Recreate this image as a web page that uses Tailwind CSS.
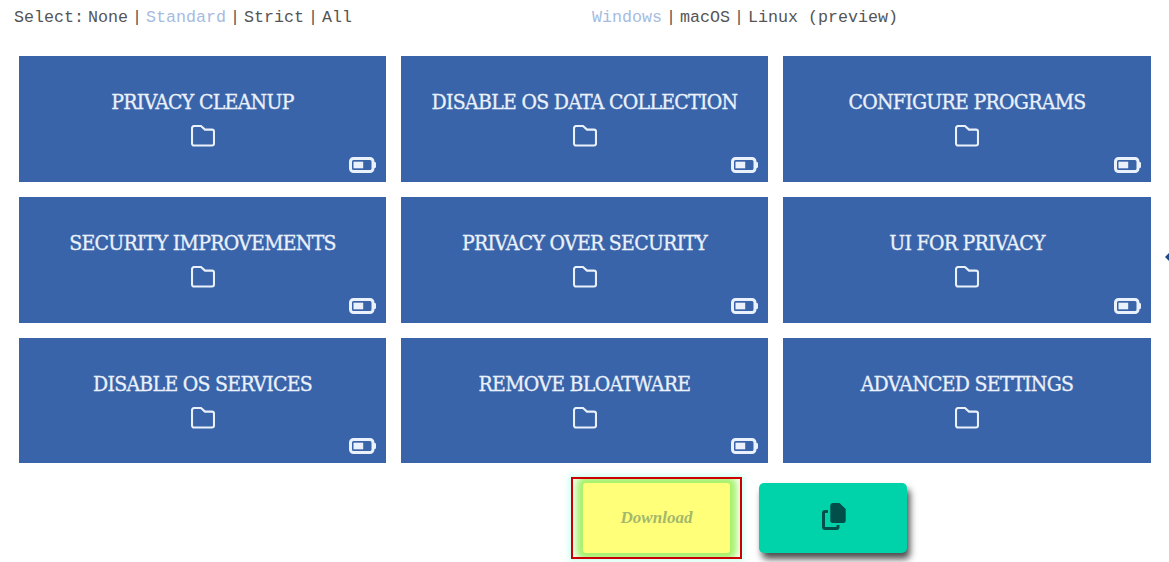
<!DOCTYPE html>
<html lang="en">
<head>
<meta charset="utf-8">
<script src="https://cdn.jsdelivr.net/npm/@tailwindcss/browser@4"></script>
<title>Privacy</title>
</head>
<body class="relative h-[562px] w-[1169px] overflow-hidden bg-white">
<svg width="0" height="0" class="absolute">
<defs>
<symbol id="folder" viewBox="0 0 24 22"><path d="M1 3.200A2.200 2.200 0 0 1 3.200 1H10L14 4.600H21A2 2 0 0 1 23 6.600V18.500A2 2 0 0 1 21 20.500H3A2 2 0 0 1 1 18.500Z" fill="none" stroke="currentColor" stroke-width="2.100" stroke-linejoin="round"/></symbol>
<symbol id="battery" viewBox="0 0 27 16"><rect x="1.500" y="1.500" width="22.500" height="13" rx="3" fill="none" stroke="currentColor" stroke-width="3"/><rect x="4.500" y="4.700" width="9.700" height="6.600" fill="currentColor"/><path d="M25 5h.8a1.200 1.200 0 0 1 1.200 1.200v3.600a1.200 1.200 0 0 1-1.200 1.200H25z" fill="currentColor"/></symbol>
</defs>
</svg>
<div class="flex h-[35px] font-['Liberation_Mono',monospace] text-[16.670px] leading-[35px] text-[#555]">
  <div class="ml-[14px] flex w-[578px]"><span class="mr-1">Select:</span><span>None</span><span class="mx-1">|</span><span class="text-[#a7bbe0]">Standard</span><span class="mx-1">|</span><span>Strict</span><span class="mx-1">|</span><span>All</span></div>
  <div class="flex"><span class="text-[#a7bbe0]">Windows</span><span class="mx-1">|</span><span>macOS</span><span class="mx-1">|</span><span>Linux (preview)</span></div>
</div>
<main class="ml-[19px] mt-[21px] grid w-[1132px] grid-cols-[367px_367px_368px] auto-rows-[125.8px] gap-[15px] font-['DejaVu_Serif',serif] text-[#eaf1fb] [font-stretch:condensed]">
  <a class="relative flex flex-col items-center bg-[#3a64a9] pt-[32px]"><h2 class="text-[21px] leading-[28px] tracking-[-0.7px] [-webkit-text-stroke:0.3px]">PRIVACY CLEANUP</h2><svg class="mt-[9px] h-[22px] w-[24px]"><use href="#folder"/></svg><svg class="absolute bottom-[9px] right-[10px] h-[16px] w-[27px]"><use href="#battery"/></svg></a>
  <a class="relative flex flex-col items-center bg-[#3a64a9] pt-[32px]"><h2 class="text-[21px] leading-[28px] tracking-[-0.7px] [-webkit-text-stroke:0.3px]">DISABLE OS DATA COLLECTION</h2><svg class="mt-[9px] h-[22px] w-[24px]"><use href="#folder"/></svg><svg class="absolute bottom-[9px] right-[10px] h-[16px] w-[27px]"><use href="#battery"/></svg></a>
  <a class="relative flex flex-col items-center bg-[#3a64a9] pt-[32px]"><h2 class="text-[21px] leading-[28px] tracking-[-0.7px] [-webkit-text-stroke:0.3px]">CONFIGURE PROGRAMS</h2><svg class="mt-[9px] h-[22px] w-[24px]"><use href="#folder"/></svg><svg class="absolute bottom-[9px] right-[10px] h-[16px] w-[27px]"><use href="#battery"/></svg></a>
  <a class="relative flex flex-col items-center bg-[#3a64a9] pt-[32px]"><h2 class="text-[21px] leading-[28px] tracking-[-0.7px] [-webkit-text-stroke:0.3px]">SECURITY IMPROVEMENTS</h2><svg class="mt-[9px] h-[22px] w-[24px]"><use href="#folder"/></svg><svg class="absolute bottom-[9px] right-[10px] h-[16px] w-[27px]"><use href="#battery"/></svg></a>
  <a class="relative flex flex-col items-center bg-[#3a64a9] pt-[32px]"><h2 class="text-[21px] leading-[28px] tracking-[-0.7px] [-webkit-text-stroke:0.3px]">PRIVACY OVER SECURITY</h2><svg class="mt-[9px] h-[22px] w-[24px]"><use href="#folder"/></svg><svg class="absolute bottom-[9px] right-[10px] h-[16px] w-[27px]"><use href="#battery"/></svg></a>
  <a class="relative flex flex-col items-center bg-[#3a64a9] pt-[32px]"><h2 class="text-[21px] leading-[28px] tracking-[-0.7px] [-webkit-text-stroke:0.3px]">UI FOR PRIVACY</h2><svg class="mt-[9px] h-[22px] w-[24px]"><use href="#folder"/></svg><svg class="absolute bottom-[9px] right-[10px] h-[16px] w-[27px]"><use href="#battery"/></svg></a>
  <a class="relative flex flex-col items-center bg-[#3a64a9] pt-[32px]"><h2 class="text-[21px] leading-[28px] tracking-[-0.7px] [-webkit-text-stroke:0.3px]">DISABLE OS SERVICES</h2><svg class="mt-[9px] h-[22px] w-[24px]"><use href="#folder"/></svg><svg class="absolute bottom-[9px] right-[10px] h-[16px] w-[27px]"><use href="#battery"/></svg></a>
  <a class="relative flex flex-col items-center bg-[#3a64a9] pt-[32px]"><h2 class="text-[21px] leading-[28px] tracking-[-0.7px] [-webkit-text-stroke:0.3px]">REMOVE BLOATWARE</h2><svg class="mt-[9px] h-[22px] w-[24px]"><use href="#folder"/></svg><svg class="absolute bottom-[9px] right-[10px] h-[16px] w-[27px]"><use href="#battery"/></svg></a>
  <a class="relative flex flex-col items-center bg-[#3a64a9] pt-[32px]"><h2 class="text-[21px] leading-[28px] tracking-[-0.7px] [-webkit-text-stroke:0.3px]">ADVANCED SETTINGS</h2><svg class="mt-[9px] h-[22px] w-[24px]"><use href="#folder"/></svg></a>
</main>
<div class="ml-[571px] mt-[13.600px] flex items-center gap-[17px]">
  <div class="overflow-hidden border-2 border-[#cc0000] px-[10px] py-[4px] shadow-[0_0_6px_2px_rgba(120,255,220,0.4)]">
    <button class="flex h-[70px] w-[147px] items-center justify-center rounded-[3px] bg-[#ffff7a] font-['Liberation_Serif',serif] text-[17px] font-bold italic text-[#a3b86c] shadow-[0_0_7px_7px_#a6f26c]">Download</button>
  </div>
  <button class="flex h-[70px] w-[148px] items-center justify-center rounded-[5px] bg-[#00d2aa] text-[#004f4a] shadow-[3px_6px_7px_rgba(0,0,0,0.7)]">
    <svg class="mb-[2px] ml-[2px] h-[27px] w-[24px]" viewBox="0 0 24 27"><path d="M10.500 0H17.500L23.700 6V17.500A2.500 2.500 0 0 1 21.200 20H10.800A2.500 2.500 0 0 1 8.300 17.500V2.500A2.500 2.500 0 0 1 10.500 0Z" fill="currentColor"/><path d="M6 8.500H3A1.500 1.500 0 0 0 1.500 10V24A1.500 1.500 0 0 0 3 25.500H14.500A1.500 1.500 0 0 0 16 24V22" fill="none" stroke="currentColor" stroke-width="3"/></svg>
  </button>
</div>
<svg class="absolute left-[1165px] top-[253px] h-[8px] w-[4px] text-[#1f4a8a]" viewBox="0 0 4 8"><path d="M4 0V8L0 4Z" fill="currentColor"/></svg>
</body>
</html>
